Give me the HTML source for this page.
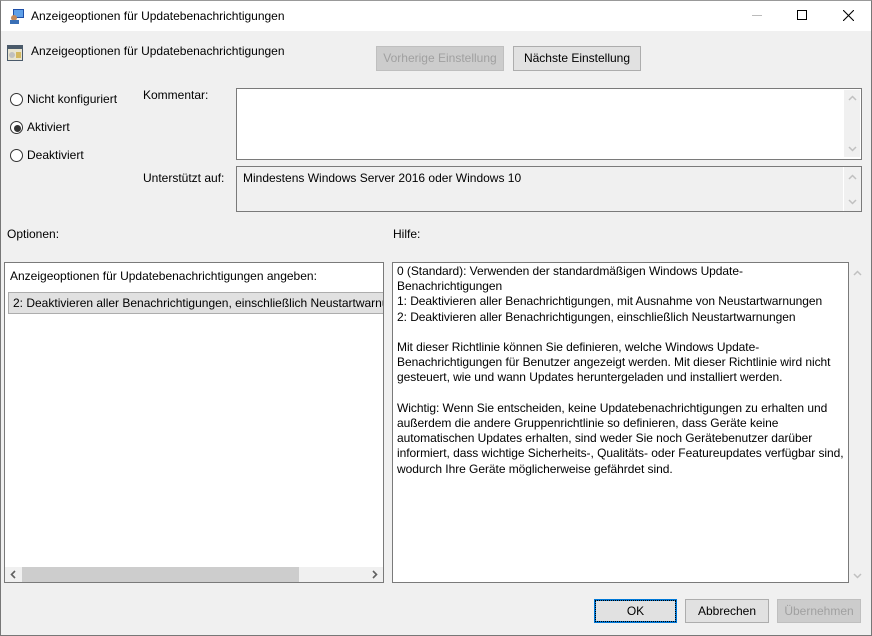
<!DOCTYPE html>
<html><head><meta charset="utf-8"><style>
*{margin:0;padding:0;box-sizing:border-box}
body{width:872px;height:636px;background:#f0f0f0;font-family:"Liberation Sans",sans-serif;font-size:12px;color:#000;position:relative;overflow:hidden}
.a{position:absolute;white-space:nowrap}
.tb{position:absolute;left:0;top:0;width:872px;height:31px;background:#fff}
.btn{position:absolute;height:25px;background:#e1e1e1;border:1px solid #adadad;text-align:center;line-height:23px}
.dis{color:#a0a0a0;background:#cccccc;border-color:#bfbfbf}
.box{position:absolute;background:#fff;border:1px solid #7a7a7a}
.rad{position:absolute;width:13px;height:13px;border:1px solid #333;border-radius:50%;background:#fff}
</style></head><body>
<div class="tb"></div>
<div style="position:absolute;left:0;top:0;width:872px;height:636px;border:1px solid #777;border-top-color:#999;pointer-events:none"></div>
<svg class="a" style="left:9px;top:8px" width="16" height="16"><rect x="4" y="1" width="11" height="9" fill="#1e4fa8"/><rect x="5" y="2" width="9" height="7" fill="#5fa0e8"/><circle cx="5" cy="10" r="3" fill="#c48a5a"/><rect x="1" y="12" width="9" height="4" fill="#3a6fb5"/></svg>
<div class="a" style="left:31px;top:9px">Anzeigeoptionen für Updatebenachrichtigungen</div>
<div class="a" style="left:752px;top:15px;width:10px;height:1px;background:#bbb"></div>
<div class="a" style="left:797px;top:10px;width:10px;height:10px;border:1px solid #000"></div>
<svg class="a" style="left:843px;top:10px" width="11" height="11"><path d="M0 0L11 11M11 0L0 11" stroke="#000" stroke-width="1.1"/></svg>

<svg class="a" style="left:7px;top:45px" width="16" height="16"><rect x="0" y="0" width="16" height="16" fill="#4a5a6a"/><rect x="1" y="4" width="14" height="11" fill="#e8e4d0"/><circle cx="5" cy="10" r="3" fill="#c0c0c0"/><rect x="9" y="7" width="5" height="6" fill="#d4b860"/></svg>
<div class="a" style="left:31px;top:44px">Anzeigeoptionen für Updatebenachrichtigungen</div>
<div class="btn dis" style="left:376px;top:46px;width:128px;background:#cccccc">Vorherige Einstellung</div>
<div class="btn" style="left:513px;top:46px;width:128px">Nächste Einstellung</div>

<div class="rad" style="left:10px;top:93px"></div><div class="a" style="left:27px;top:92px">Nicht konfiguriert</div>
<div class="rad" style="left:10px;top:121px"></div><div class="a" style="left:14px;top:125px;width:7px;height:7px;border-radius:50%;background:#333"></div><div class="a" style="left:27px;top:120px">Aktiviert</div>
<div class="rad" style="left:10px;top:149px"></div><div class="a" style="left:27px;top:148px">Deaktiviert</div>

<div class="a" style="left:143px;top:88px">Kommentar:</div>
<div class="box" style="left:236px;top:88px;width:626px;height:72px"></div>
<div class="a" style="left:844px;top:90px;width:16px;height:67px;background:#f0f0f0"></div>
<svg class="a" style="left:848px;top:95px" width="9" height="6"><path d="M1 5L4.5 1.5L8 5" stroke="#c0c0c0" stroke-width="1.5" fill="none"/></svg>
<svg class="a" style="left:848px;top:146px" width="9" height="6"><path d="M1 1L4.5 4.5L8 1" stroke="#c0c0c0" stroke-width="1.5" fill="none"/></svg>
<div class="a" style="left:143px;top:171px">Unterstützt auf:</div>
<div class="box" style="left:236px;top:166px;width:626px;height:46px;background:#f0f0f0"></div>
<div class="a" style="left:843px;top:167px;width:1px;height:44px;background:#fff"></div>
<div class="a" style="left:243px;top:171px">Mindestens Windows Server 2016 oder Windows 10</div>
<svg class="a" style="left:848px;top:174px" width="9" height="6"><path d="M1 5L4.5 1.5L8 5" stroke="#c0c0c0" stroke-width="1.5" fill="none"/></svg>
<svg class="a" style="left:848px;top:199px" width="9" height="6"><path d="M1 1L4.5 4.5L8 1" stroke="#c0c0c0" stroke-width="1.5" fill="none"/></svg>

<div class="a" style="left:7px;top:227px">Optionen:</div>
<div class="a" style="left:393px;top:227px">Hilfe:</div>

<div class="box" style="left:4px;top:262px;width:380px;height:321px"></div>
<div class="a" style="left:10px;top:269px">Anzeigeoptionen für Updatebenachrichtigungen angeben:</div>
<div class="a" style="left:8px;top:292px;width:375px;height:22px;background:#e1e1e1;border:1px solid #adadad;border-right:none;overflow:hidden;padding:3px 0 0 4px">2: Deaktivieren aller Benachrichtigungen, einschließlich Neustartwarnungen</div>
<div class="a" style="left:5px;top:567px;width:378px;height:15px;background:#f0f0f0"></div>
<div class="a" style="left:22px;top:567px;width:277px;height:15px;background:#cdcdcd"></div>
<svg class="a" style="left:10px;top:570px" width="6" height="9"><path d="M5 1L1.5 4.5L5 8" stroke="#606060" stroke-width="1.6" fill="none"/></svg>
<svg class="a" style="left:372px;top:570px" width="6" height="9"><path d="M1 1L4.5 4.5L1 8" stroke="#606060" stroke-width="1.6" fill="none"/></svg>

<div class="box" style="left:392px;top:262px;width:457px;height:321px"></div>
<div class="a" style="left:397px;top:264px;line-height:15.2px;white-space:pre;letter-spacing:-0.05px">0 (Standard): Verwenden der standardmäßigen Windows Update-
Benachrichtigungen
1: Deaktivieren aller Benachrichtigungen, mit Ausnahme von Neustartwarnungen
2: Deaktivieren aller Benachrichtigungen, einschließlich Neustartwarnungen

Mit dieser Richtlinie können Sie definieren, welche Windows Update-
Benachrichtigungen für Benutzer angezeigt werden. Mit dieser Richtlinie wird nicht
gesteuert, wie und wann Updates heruntergeladen und installiert werden.

Wichtig: Wenn Sie entscheiden, keine Updatebenachrichtigungen zu erhalten und
außerdem die andere Gruppenrichtlinie so definieren, dass Geräte keine
automatischen Updates erhalten, sind weder Sie noch Gerätebenutzer darüber
informiert, dass wichtige Sicherheits-, Qualitäts- oder Featureupdates verfügbar sind,
wodurch Ihre Geräte möglicherweise gefährdet sind.</div>
<svg class="a" style="left:853px;top:270px" width="9" height="6"><path d="M1 5L4.5 1.5L8 5" stroke="#c0c0c0" stroke-width="1.5" fill="none"/></svg>
<svg class="a" style="left:853px;top:573px" width="9" height="6"><path d="M1 1L4.5 4.5L8 1" stroke="#c0c0c0" stroke-width="1.5" fill="none"/></svg>

<div class="btn" style="left:594px;top:599px;width:83px;height:24px;border:2px solid #0078d7;line-height:20px"><span style="outline:1px dotted #000;outline-offset:2px;display:block;margin:2px;line-height:16px">OK</span></div>
<div class="btn" style="left:685px;top:599px;width:84px;height:24px;line-height:22px">Abbrechen</div>
<div class="btn dis" style="left:777px;top:599px;width:84px;height:24px;line-height:22px">Übernehmen</div>
</body></html>
